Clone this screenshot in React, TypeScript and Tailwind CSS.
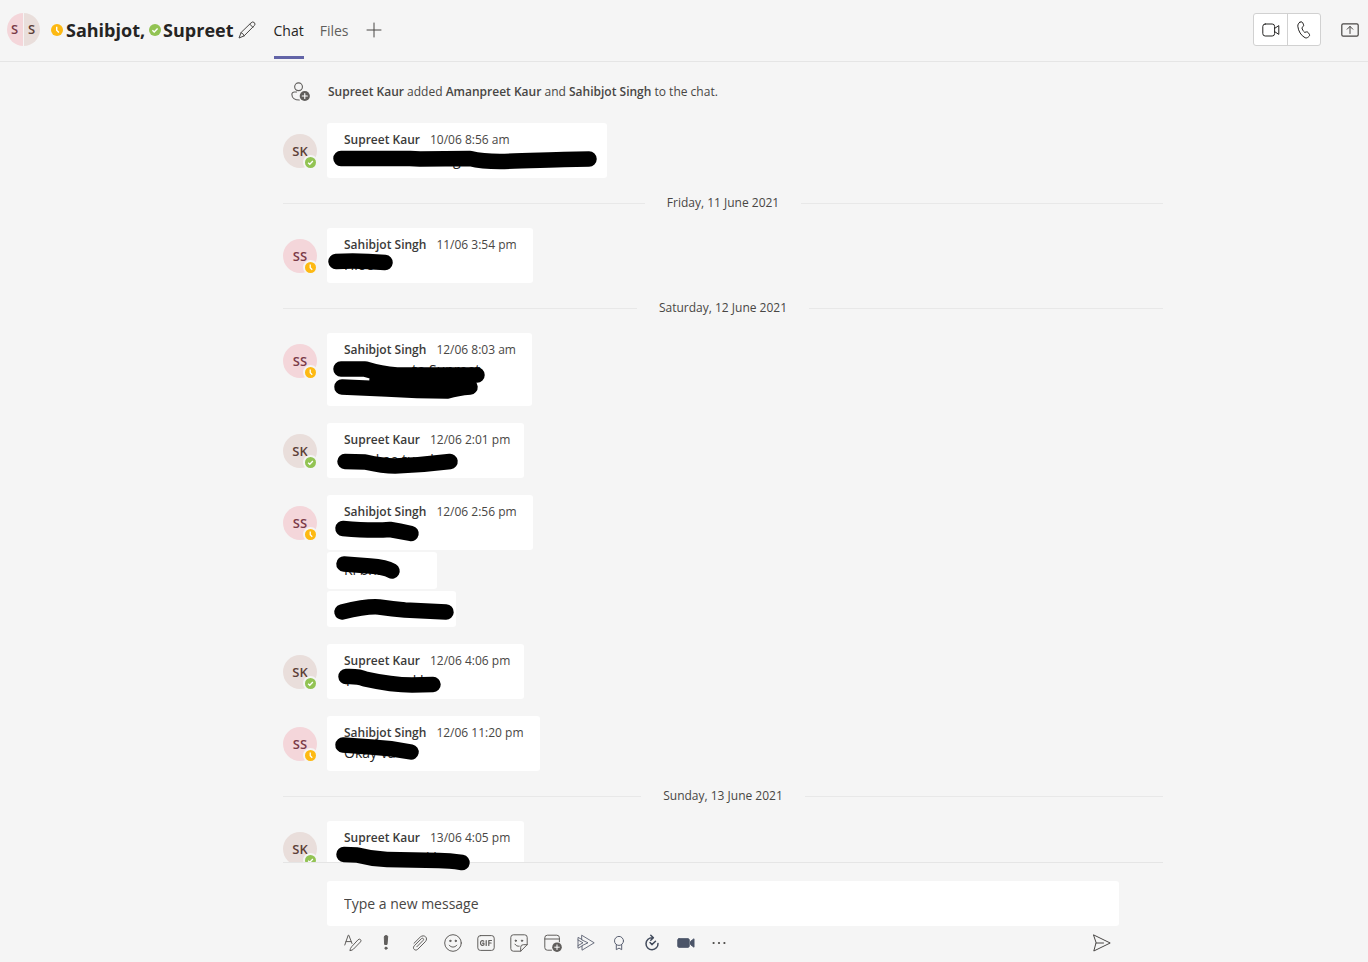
import React from "react";

type Person = "SK" | "SS";

type Fragment = { text: string; gap: string };

type Bubble = {
  width: string;
  time?: string;
  lines: Fragment[][];
  strokes: string[];
};

type Entry =
  | { kind: "day"; label: string }
  | { kind: "group"; person: Person; bubbles: Bubble[] };

const names: Record<Person, string> = { SK: "Supreet Kaur", SS: "Sahibjot Singh" };

const entries: Entry[] = [
  {
    kind: "group",
    person: "SK",
    bubbles: [
      {
        width: "w-[280px]",
        time: "10/06 8:56 am",
        lines: [[{ text: "g", gap: "ml-[109px]" }, { text: ",", gap: "ml-24" }]],
        strokes: ["M14 35.500H83L93 36L143 35.500Q155 38.500 173 38.500C200 38 240 36 262 36"],
      },
    ],
  },
  { kind: "day", label: "Friday, 11 June 2021" },
  {
    kind: "group",
    person: "SS",
    bubbles: [
      {
        width: "w-[206px]",
        time: "11/06 3:54 pm",
        lines: [[{ text: "Hloo", gap: "ml-0" }]],
        strokes: ["M9 33.500Q30 32 58 34.500"],
      },
    ],
  },
  { kind: "day", label: "Saturday, 12 June 2021" },
  {
    kind: "group",
    person: "SS",
    bubbles: [
      {
        width: "w-[205px]",
        time: "12/06 8:03 am",
        lines: [[{ text: "to Supreet", gap: "ml-[68px]" }], [{ text: "N", gap: "ml-0" }]],
        strokes: ["M14 36L38 36Q54 41 70 42L150 42", "M15 54L60 56Q90 58 120 58Q130 55 143 54", "M50 47H140"],
      },
    ],
  },
  {
    kind: "group",
    person: "SK",
    bubbles: [
      {
        width: "w-[197px]",
        time: "12/06 2:01 pm",
        lines: [[{ text: "S", gap: "ml-1" }, { text: "l aa tus", gap: "ml-5" }, { text: "l", gap: "ml-2" }]],
        strokes: ["M18 38.500L38 39Q56 43 68 43Q95 42 123 38.500"],
      },
    ],
  },
  {
    kind: "group",
    person: "SS",
    bubbles: [
      {
        width: "w-[206px]",
        time: "12/06 2:56 pm",
        lines: [[]],
        strokes: ["M16 33.500Q45 36 63 34.500Q72 36 84 38.500"],
      },
      {
        width: "w-[110px]",
        lines: [[{ text: "Ki bnna", gap: "ml-0" }]],
        strokes: ["M17 12L43 14Q58 15 65 19"],
      },
      {
        width: "w-[129px]",
        lines: [[]],
        strokes: ["M15 21Q40 15 52 16Q66 18 78 19L119 21"],
      },
    ],
  },
  {
    kind: "group",
    person: "SK",
    bubbles: [
      {
        width: "w-[197px]",
        time: "12/06 4:06 pm",
        lines: [[{ text: "T", gap: "ml-0" }, { text: "d l", gap: "ml-[56px]" }]],
        strokes: ["M19 32.500Q32 32 38 35Q65 41 85 41L106 40.500"],
      },
    ],
  },
  {
    kind: "group",
    person: "SS",
    bubbles: [
      {
        width: "w-[213px]",
        time: "12/06 11:20 pm",
        lines: [[{ text: "Okay va", gap: "ml-0" }]],
        strokes: ["M16 29L44 31Q64 32 84 36"],
      },
    ],
  },
  { kind: "day", label: "Sunday, 13 June 2021" },
  {
    kind: "group",
    person: "SK",
    bubbles: [
      {
        width: "w-[197px]",
        time: "13/06 4:05 pm",
        lines: [[{ text: "l l", gap: "ml-[82px]" }]],
        strokes: ["M17 33.500L30 34Q45 38 60 38.500L112 39.500Q122 39.500 135 41.500"],
      },
    ],
  },
];

function Status({ person, className }: { person: Person; className: string }) {
  return (
    <svg viewBox="0 0 12 12" className={className} aria-hidden="true">
      <circle cx="6" cy="6" r="6" fill={person === "SK" ? "#92c353" : "#fdb913"} />
      <path
        d={person === "SK" ? "M3.400 6.200 5.200 7.900 8.600 4.400" : "M5.700 2.800V6.300L7.900 8.400"}
        fill="none"
        stroke="#fff"
        strokeWidth="1.4"
      />
    </svg>
  );
}

function Avatar({ person }: { person: Person }) {
  const tone = person === "SK" ? "bg-[#e9dedb] text-[#5d4037]" : "bg-[#f4d6da] text-[#7b3a48]";
  return (
    <div
      className={`relative mt-[11px] flex size-[34px] shrink-0 items-center justify-center rounded-full pt-0.5 text-[13px] font-semibold ${tone}`}
    >
      {person}
      <span className="absolute -right-px -bottom-0.5 rounded-full bg-[#f5f5f5] p-0.5">
        <Status person={person} className="size-[11px]" />
      </span>
    </div>
  );
}

function BubbleView({ person, bubble }: { person: Person; bubble: Bubble }) {
  return (
    <div
      className={`relative rounded-[3px] bg-white pr-2 pl-[17px] ${
        bubble.time ? "pt-[9px] pb-[9px]" : "pt-[9px] pb-[10px] last:pb-[9px]"
      } ${bubble.width}`}
    >
      {bubble.time && (
        <div className="mb-[3px] flex gap-[10px] text-[12px] leading-4 whitespace-nowrap">
          <span className="font-semibold text-[#3b3a39]">{names[person]}</span>
          <time className="text-[#484644]">{bubble.time}</time>
        </div>
      )}
      {bubble.lines.map((line, i) => (
        <p key={i} className="flex h-[18px] text-[14px] leading-[18px] whitespace-nowrap text-[#252423]">
          {line.map((f) => (
            <span key={f.text} className={f.gap}>
              {f.text}
            </span>
          ))}
        </p>
      ))}
      <svg className="absolute top-0 left-0 z-20 size-full overflow-visible" aria-hidden="true">
        {bubble.strokes.map((d) => (
          <path key={d} d={d} fill="none" stroke="#000" strokeWidth="15.5" strokeLinecap="round" strokeLinejoin="round" />
        ))}
      </svg>
    </div>
  );
}

function Day({ label }: { label: string }) {
  return (
    <div className="flex h-4 items-center gap-[22px]">
      <span className="h-px flex-1 bg-[#e8e8e8]" />
      <span className="text-[12px] leading-4 text-[#484644]">{label}</span>
      <span className="h-px flex-1 bg-[#e8e8e8]" />
    </div>
  );
}

function Icon({ children, className = "size-[18px]" }: { children: React.ReactNode; className?: string }) {
  return (
    <svg
      viewBox="0 0 18 18"
      className={className}
      fill="none"
      stroke="currentColor"
      strokeWidth="1"
      strokeLinecap="round"
      strokeLinejoin="round"
      aria-hidden="true"
    >
      {children}
    </svg>
  );
}

const tools: { label: string; tint: string; art: React.ReactNode }[] = [
  {
    label: "Format",
    tint: "text-[#605e5c]",
    art: (
      <>
        <path d="M.8 11 4.200 1.200h.6L8 9.500M2 7.600h5" />
        <path d="M14.200 5.600a1.600 1.600 0 0 1 2.300 2.300l-7 7.200c-.8.8-1.900 1.300-3.600 1.600.2-1.700.8-2.900 1.500-3.700z" />
      </>
    ),
  },
  {
    label: "Set delivery options",
    tint: "text-[#605e5c]",
    art: (
      <>
        <path d="M7.300 2.600c0-1.500 3.400-1.500 3.400 0L10 10.500H8z" fill="currentColor" />
        <circle cx="9" cy="14.2" r="1.1" fill="currentColor" />
      </>
    ),
  },
  {
    label: "Attach",
    tint: "text-[#605e5c]",
    art: (
      <path d="m5.800 12.800 6.400-6.500c1.200-1.200-.5-2.800-1.700-1.700l-7.300 7.300c-2.300 2.600 1.100 5.600 3.500 3.400l7.500-7.500c3.700-3.900-1.200-8-4.900-4.800L3 9.300" />
    ),
  },
  {
    label: "Emoji",
    tint: "text-[#605e5c]",
    art: (
      <>
        <circle cx="9" cy="9" r="8.3" />
        <path d="M5.200 11.200c2 2.600 5.600 2.600 7.600 0" />
        <circle cx="6.3" cy="6.9" r=".7" fill="currentColor" />
        <circle cx="11.7" cy="6.9" r=".7" fill="currentColor" />
      </>
    ),
  },
  {
    label: "GIF",
    tint: "text-[#605e5c]",
    art: (
      <>
        <rect x=".8" y="1.6" width="16.4" height="14.8" rx="2.6" />
        <path
          d="M6.800 7.200C5.400 5.900 3.500 6.700 3.500 9s2 3.100 3.400 1.900V9.200H5.600M9.200 6.500v5M11.800 11.500v-5h2.700M11.800 9h2.300"
          strokeWidth="1.2"
        />
      </>
    ),
  },
  {
    label: "Sticker",
    tint: "text-[#605e5c]",
    art: (
      <>
        <path d="M17.200 10.700V3.400A2.600 2.600 0 0 0 14.600.8H3.400A2.600 2.600 0 0 0 .8 3.400v11.200a2.600 2.600 0 0 0 2.600 2.600h7.300l6.500-6.500h-3.900a2.600 2.600 0 0 0-2.600 2.600v3.900" />
        <path d="M5 10.200c.9 1.600 2.500 2.200 4.200 2" />
        <circle cx="5.8" cy="6.7" r=".7" fill="currentColor" />
        <circle cx="12" cy="6.7" r=".7" fill="currentColor" />
      </>
    ),
  },
  {
    label: "Schedule a meeting",
    tint: "text-[#605e5c]",
    art: (
      <>
        <path d="M7.500 16.200H3.400a2.600 2.600 0 0 1-2.600-2.600V3.800a2.600 2.600 0 0 1 2.600-2.600h9.400a2.600 2.600 0 0 1 2.600 2.600v4M.8 5h14.600" />
        <circle cx="13" cy="13.2" r="4.8" fill="currentColor" stroke="none" />
        <path d="M13 10.900v4.600M10.700 13.200h4.600" stroke="#fff" />
      </>
    ),
  },
  {
    label: "Stream",
    tint: "text-[#5b6172]",
    art: <path d="M5 1.400 17.200 8.800 5 16.200V11.600l6-2.800L5 6zM5 5.500 1 3.400v10.800l4-2.200M1 6l5 2.800-5 2.800" strokeWidth=".9" />,
  },
  {
    label: "Praise",
    tint: "text-[#5b6172]",
    art: (
      <>
        <circle cx="9" cy="6.9" r="4.5" />
        <path d="M6.300 10.700v5L9 14.100l2.700 1.600v-5" />
      </>
    ),
  },
  {
    label: "Updates",
    tint: "text-[#424b5c]",
    art: (
      <>
        <path d="M9.500 3.800a6 6 0 1 0 5.500 5.600M7.800 1.300l2.600 2.500-2.600 2.500" strokeWidth="1.5" />
        <path d="m7 8.600 1.900 2 3.600-3.400" strokeWidth="1.5" />
      </>
    ),
  },
  {
    label: "Video clip",
    tint: "text-[#4b5468]",
    art: (
      <>
        <rect x=".8" y="4.7" width="11.4" height="8.6" rx="1.2" fill="currentColor" />
        <path d="m13.800 7.200 3.200-2.400v8.400l-3.200-2.400z" fill="currentColor" />
      </>
    ),
  },
  {
    label: "More options",
    tint: "text-[#484644]",
    art: (
      <g fill="currentColor" stroke="none">
        <circle cx="3.6" cy="9" r="1.1" />
        <circle cx="9" cy="9" r="1.1" />
        <circle cx="14.4" cy="9" r="1.1" />
      </g>
    ),
  },
];

function Header() {
  return (
    <header className="flex h-[62px] shrink-0 items-center border-b border-[#e5e5e5] pr-[9px] pb-0.5 pl-[7px]">
      <div className="flex size-[33px] gap-px overflow-hidden rounded-full text-[13px] font-semibold">
        <span className="flex flex-1 items-center justify-center bg-[#f4d6da] pr-px text-[#7b3a48]">S</span>
        <span className="flex flex-1 items-center justify-center bg-[#e9dedb] pr-px text-[#5d4037]">S</span>
      </div>
      <h1 className="ml-[11px] flex items-center text-[18px] leading-6 font-bold text-[#252423]">
        <Status person="SS" className="mr-[3px] size-3" />
        Sahibjot,
        <Status person="SK" className="mr-0.5 ml-1 size-3" />
        Supreet
      </h1>
      <button type="button" aria-label="Edit group name" className="ml-1 text-[#484644]">
        <Icon>
          <path d="M13.300 1.600a2 2 0 0 1 3 3L6.100 14.900 1 17l2-5.200zM11.800 3.200l3 3M3 11.800c1.400.2 2.700 1.500 3.100 3.100" />
        </Icon>
      </button>
      <nav className="ml-[18px] flex h-full items-center gap-4 text-[14px]">
        <a
          href="#chat"
          aria-current="page"
          className="flex h-full items-center border-b-[3px] border-[#6264a7] pt-1 font-medium text-[#252423]"
        >
          Chat
        </a>
        <a href="#files" className="flex h-full items-center pt-0.5 text-[#605e5c]">
          Files
        </a>
        <button type="button" aria-label="Add a tab" className="text-[#484644]">
          <Icon>
            <path d="M9 2v14M2 9h14" />
          </Icon>
        </button>
      </nav>
      <div className="ml-auto flex h-[33px] divide-x divide-[#d1d1d1] rounded-[3px] border border-[#d1d1d1] bg-white text-[#252423]">
        <button type="button" aria-label="Video call" className="flex w-[34px] items-center justify-center">
          <Icon>
            <rect x=".8" y="3" width="11.8" height="12" rx="2.4" />
            <path d="M12.600 7.400 16.800 4.600v8.800l-4.200-2.800" />
          </Icon>
        </button>
        <button type="button" aria-label="Audio call" className="flex w-8 items-center justify-center">
          <Icon>
            <path d="M4.800 1.300 6 .9c.7-.2 1.400.1 1.700.8l.9 2.200c.2.6.1 1.200-.4 1.600L6.900 6.700c.3 1.700 1.300 3.500 2.800 4.700l1.700-.5c.6-.2 1.200 0 1.600.5l1.400 1.900c.4.6.3 1.400-.2 1.900l-.9.8c-.9.9-2.200 1.200-3.300.7-3.900-2.100-6.700-6.500-7.200-11.500 0-1.700.7-3.300 2-3.900z" />
          </Icon>
        </button>
      </div>
      <button type="button" aria-label="Share screen" className="ml-5 text-[#484644]">
        <Icon>
          <rect x=".8" y="2.8" width="16.4" height="12.4" rx="1.4" strokeWidth="1.2" />
          <path d="M9 12.500V5.500M6.200 8.200 9 5.400l2.800 2.800" />
        </Icon>
      </button>
    </header>
  );
}

export default function App() {
  return (
    <div className="flex h-screen flex-col overflow-hidden bg-[#f5f5f5] font-['Open_Sans','Noto_Sans',sans-serif]">
      <Header />
      <main className="flex min-h-0 flex-1 flex-col gap-[17px] pt-4 pr-[205px] pl-[283px]">
        <div className="flex h-7 shrink-0 items-center text-[12px] text-[#484644]">
          <span className="mr-[17px] ml-2 text-[#605e5c]">
            <Icon className="size-5">
              <circle cx="6.8" cy="4.3" r="3.5" />
              <path d="M5 9H3a2.200 2.200 0 0 0-2.200 2.200c0 3 2.700 5 6.700 5" />
              <circle cx="12.4" cy="12.6" r="4.6" fill="currentColor" stroke="none" />
              <path d="M12.400 10.300v4.600M10.100 12.600h4.600" stroke="#fff" />
            </Icon>
          </span>
          <p>
            <b className="font-semibold">Supreet Kaur</b> added <b className="font-semibold">Amanpreet Kaur</b> and{" "}
            <b className="font-semibold">Sahibjot Singh</b> to the chat.
          </p>
        </div>
        {entries.map((entry, i) =>
          entry.kind === "day" ? (
            <Day key={i} label={entry.label} />
          ) : (
            <article key={i} className="flex items-start gap-[10px]">
              <Avatar person={entry.person} />
              <div className="flex flex-col gap-0.5">
                {entry.bubbles.map((bubble, j) => (
                  <BubbleView key={j} person={entry.person} bubble={bubble} />
                ))}
              </div>
            </article>
          ),
        )}
      </main>
      <footer className="relative z-10 shrink-0 bg-[#f5f5f5] pr-[205px] pl-[283px]">
        <div className="border-t border-[#e5e5e5] px-11 pt-[18px] pb-[10px]">
          <input
            type="text"
            aria-label="Type a new message"
            placeholder="Type a new message"
            className="block h-[45px] w-full rounded-[3px] bg-white px-[17px] text-[14px] text-[#252423] outline-none placeholder:text-[#484644]"
          />
          <div className="mt-2 flex items-center justify-between pr-2 pl-[17px]">
            <div className="flex w-96 justify-between">
              {tools.map((tool) => (
                <button key={tool.label} type="button" aria-label={tool.label} className={tool.tint}>
                  <Icon>{tool.art}</Icon>
                </button>
              ))}
            </div>
            <button type="button" aria-label="Send" className="text-[#484644]">
              <Icon>
                <path d="M.8 1 17.200 9 .8 17l2.200-8zM3 9h7.500" />
              </Icon>
            </button>
          </div>
        </div>
      </footer>
    </div>
  );
}
